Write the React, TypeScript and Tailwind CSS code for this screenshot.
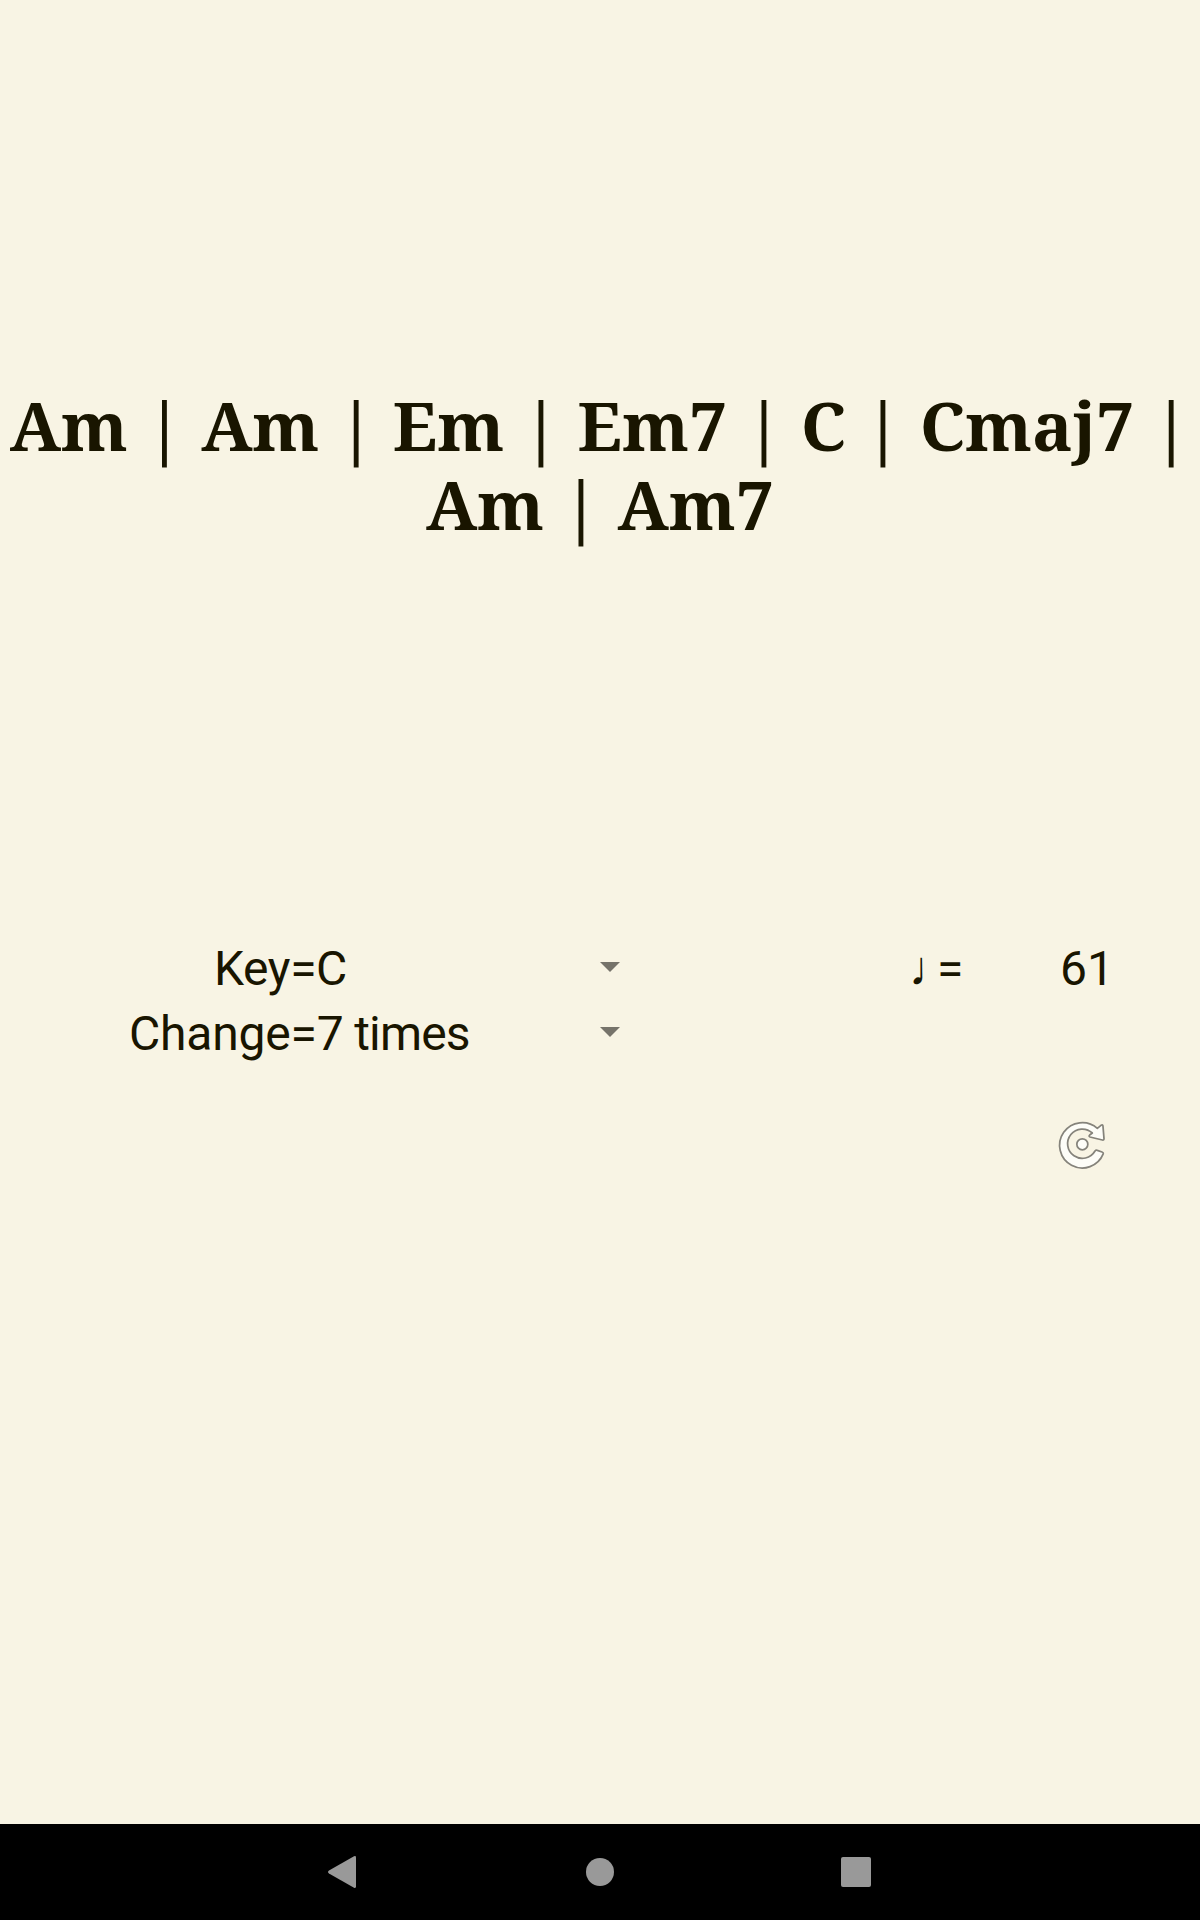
import type { ReactNode } from "react";

const chords = ["Am", "Am", "Em", "Em7", "C", "Cmaj7", "Am", "Am7"];

function DropdownArrow() {
  return (
    <svg width="20" height="10" viewBox="0 0 20 10" className="mb-[3px] shrink-0">
      <path d="M0 0H20L10 10Z" fill="#76736a" />
    </svg>
  );
}

function RefreshIcon() {
  return (
    <svg width="80" height="80" viewBox="0 0 240 240">
      <g fill="#fdfdf8" stroke="#85837b" strokeWidth="5.2" strokeLinejoin="round">
        <path d="M190 149A68 68 0 1 1 172 73L183 64Q189 60 189 67L192 104Q192 109 187 108L150 99Q145 97 149 93L157 87A44 44 0 1 0 165 141Q168 137 172 139L186 144Q191 146 190 149Z" />
        <circle cx="127" cy="121" r="16.500" />
      </g>
    </svg>
  );
}

function Spinner({ children, indent }: { children: ReactNode; indent: string }) {
  return (
    <div className="flex h-[65px] w-[620px] items-center justify-between">
      <span className={`whitespace-pre ${indent}`}>{children}</span>
      <DropdownArrow />
    </div>
  );
}

export default function App() {
  return (
    <div className="flex h-[1920px] w-[1200px] flex-col overflow-hidden bg-[#f8f4e4] font-['Roboto',sans-serif] text-[48px] leading-[65px] text-[#191500]">
      <main className="flex flex-1 flex-col pt-[385px]">
        <h1 className="h-[158px] text-center font-['Noto_Serif',serif] text-[68px] leading-[79px] font-bold tracking-[-0.09px]">
          {chords.join(" | ")}
        </h1>

        <div className="mt-[393px] flex">
          <div>
            <Spinner indent="pl-[214px] tracking-[-0.4px]">Key=C</Spinner>
            <Spinner indent="pl-[129px]">
              <span className="tracking-[-0.2px]">Change=7 </span>
              <span className="ml-[-1px] tracking-[-0.8px]">times</span>
            </Spinner>
          </div>
          <div className="flex flex-1 pl-[289px]">
            <span className="w-[28px] overflow-hidden">♩</span>
            <span className="w-[123px]">=</span>
            <span>61</span>
          </div>
        </div>

        <div className="mt-[38px] flex justify-end pr-[80px]">
          <button aria-label="Refresh">
            <RefreshIcon />
          </button>
        </div>
      </main>

      <nav className="flex h-24 items-center bg-black pl-[328px]">
        <svg width="28" height="32" viewBox="0 0 28 32" fill="#999">
          <path d="M26 .3Q28 -.5 28 1.500V30.500Q28 32.500 26 31.700L1 17.500Q-1 16 1 14.500Z" />
        </svg>
        <span className="ml-[230px] size-7 rounded-full bg-[#999]" />
        <span className="ml-[227px] size-[30px] rounded-[2px] bg-[#999]" />
      </nav>
    </div>
  );
}
